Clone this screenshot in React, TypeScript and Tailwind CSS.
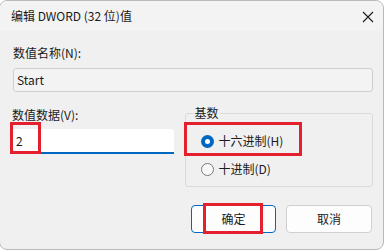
import React from "react";

const font = { fontFamily: '"Noto Sans CJK SC", "Noto Sans", sans-serif' };

export default function App() {
  return (
    <div className="w-[385px] h-[251px] bg-white relative overflow-hidden text-[12px] leading-[16px] text-[#1a1a1a]" style={font}>
      <div className="w-[385px] h-[250px] border border-[#b9b9b9] rounded-[8px] bg-[#f0f0f0] overflow-hidden flex flex-col -ml-[1px]">
        {/* title bar */}
        <div className="h-[30px] bg-[#f3f3f3] flex items-center justify-between pl-[11px] pr-[9px] shrink-0">
          <span className="text-[12px]">编辑 DWORD (32 位)值</span>
          <svg width="12" height="12" viewBox="0 0 12 12" className="mt-[1px]">
            <path d="M1 1 L11 11 M11 1 L1 11" stroke="#1a1a1a" strokeWidth="1.1" />
          </svg>
        </div>
        {/* body */}
        <div className="flex flex-col pl-[12px] pr-[10px] pt-[14px]">
          <div className="pl-[1px]">数值名称(N):</div>
          <div className="mt-[7px] ml-[1px] h-[24px] w-[360px] border border-[#cfcfcf] rounded-[3px] bg-[#f3f3f3] flex items-center pl-[3px]">
            Start
          </div>
          <div className="flex mt-[15px]">
            <div className="w-[162px] flex flex-col">
              <div>数值数据(V):</div>
              <div className="mt-[6px] h-[25px] bg-white border-b-[2px] border-[#0067c0] rounded-t-[3px] flex items-center pl-[4px]">
                2
              </div>
            </div>
            <div className="ml-[11px] mt-[6px] w-[189px] h-[74px] border border-[#dadada] rounded-[3px] relative flex flex-col pl-[15px] pt-[19px] gap-[12px]">
              <span className="absolute -top-[9px] left-[8px] px-[1px] bg-[#f0f0f0]">基数</span>
              <div className="flex items-center gap-[5px]">
                <span className="w-[13px] h-[13px] rounded-full bg-[#0067c0] flex items-center justify-center">
                  <span className="w-[5px] h-[5px] rounded-full bg-white" />
                </span>
                <span>十六进制(H)</span>
              </div>
              <div className="flex items-center gap-[5px]">
                <span className="w-[13px] h-[13px] rounded-full border border-[#7a7a7a] bg-[#f8f8f8]" />
                <span>十进制(D)</span>
              </div>
            </div>
          </div>
          <div className="flex justify-end gap-[10px] mt-[18px] pr-[1px]">
            <button className="w-[85px] h-[28px] rounded-[4px] border border-[#0067c0] bg-[#fdfdfd] text-[12px]">确定</button>
            <button className="w-[86px] h-[28px] rounded-[4px] border border-[#d0d0d0] bg-[#fdfdfd] text-[12px]">取消</button>
          </div>
        </div>
      </div>
      {/* red annotations */}
      <div className="absolute left-[10px] top-[122px] w-[31px] h-[32px] border-[3px] border-[#e5202e]" />
      <div className="absolute left-[184px] top-[122px] w-[118px] h-[34px] border-[3px] border-[#e5202e]" />
      <div className="absolute left-[203px] top-[203px] w-[60px] h-[31px] border-[3px] border-[#e5202e]" />
    </div>
  );
}
